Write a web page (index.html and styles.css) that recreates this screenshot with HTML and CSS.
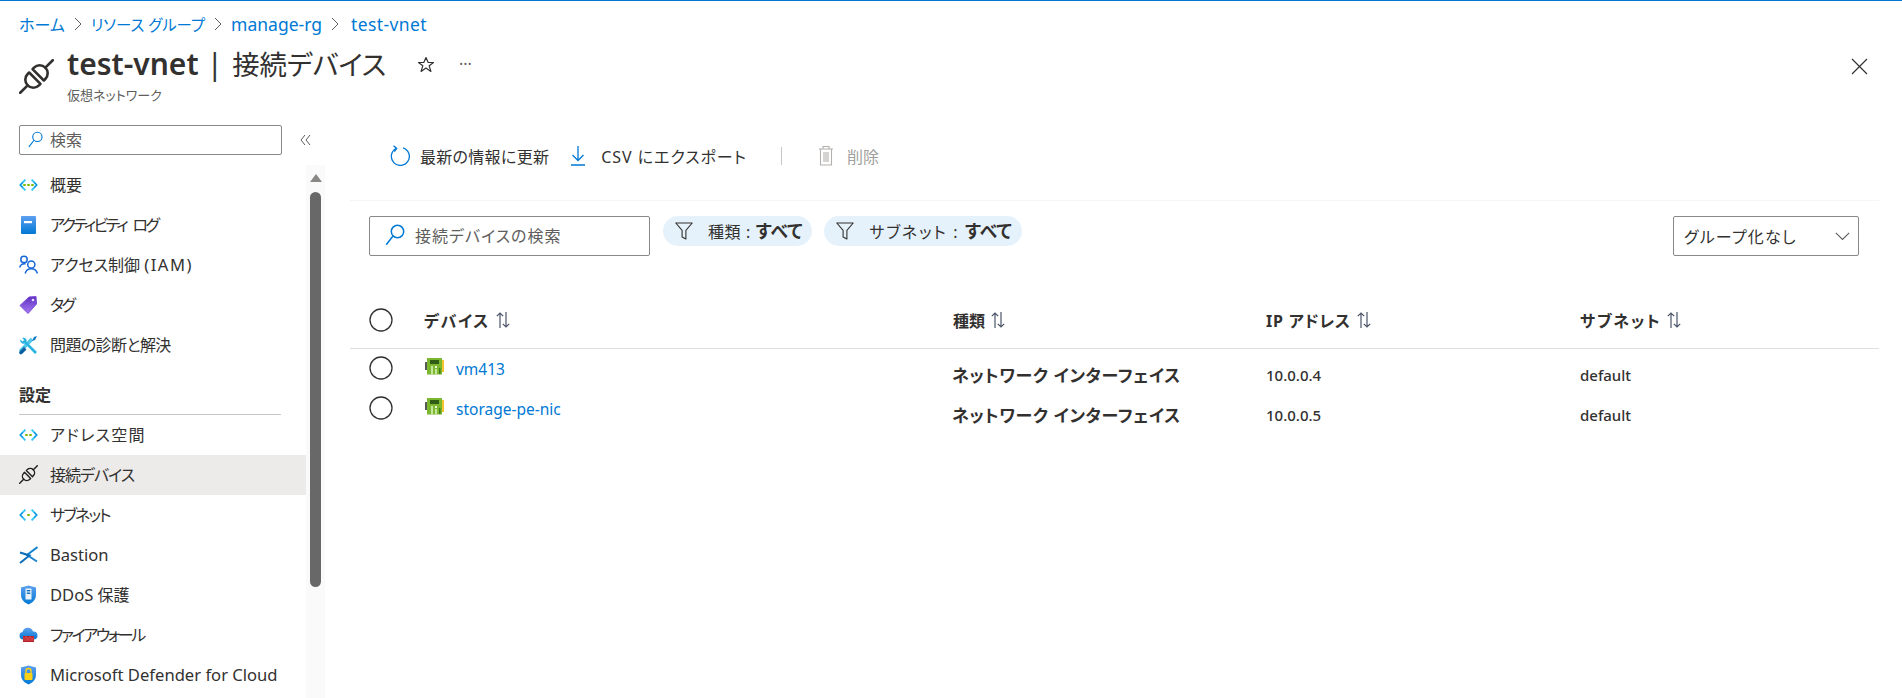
FILE: index.html
```html
<!DOCTYPE html>
<html lang="ja">
<head>
<meta charset="utf-8">
<title>test-vnet | 接続デバイス</title>
<link rel="stylesheet" href="styles.css">
</head>
<body>
<svg class="defs" width="0" height="0" aria-hidden="true">
  <defs>
    <linearGradient id="gb" x1="0" y1="0" x2="0" y2="1"><stop offset="0" stop-color="#5ea0ef"/><stop offset="1" stop-color="#0078d4"/></linearGradient>
    <linearGradient id="gp" x1="0" y1="0" x2="0" y2="1"><stop offset="0" stop-color="#5e2fc0"/><stop offset="1" stop-color="#a67af4"/></linearGradient>
    <symbol id="plug" viewBox="0 0 35 35">
      <g transform="rotate(-45 17.5 17.5) translate(17.5 17.5)" fill="none" stroke="currentColor" stroke-width="2.6" stroke-linecap="round" stroke-linejoin="round">
        <path d="M-2.4-8H-4.5A8 8 0 0 0-4.5 8H-2.4Z"/>
        <path d="M2.4-8H4.5A8 8 0 0 1 4.5 8H2.4Z"/>
        <path d="M-12.5 0H-23M12.5 0H23"/>
      </g>
    </symbol>
    <symbol id="chev" viewBox="0 0 19 12">
      <path d="M6.4 .6 1.2 6l5.2 5.4" fill="none" stroke="#3cc8f4" stroke-width="1.9"/>
      <path d="M12.6 .6 17.8 6l-5.2 5.4" fill="none" stroke="#3cc8f4" stroke-width="1.9"/>
      <path d="M4 3.4 1.2 6l2.8 2.6M15 3.4 17.8 6 15 8.6" fill="none" stroke="#0078d4" stroke-width="1"/>
    </symbol>
    <symbol id="sort" viewBox="0 0 14 18">
      <path d="M4 17V2M.8 5.2 4 2l3.2 3.2M10 1v15M6.8 12.8 10 16l3.2-3.2" fill="none" stroke="#4a5568" stroke-width="1.2"/>
    </symbol>
    <symbol id="mag" viewBox="0 0 20 22">
      <circle cx="12.5" cy="7.5" r="6.2" fill="none" stroke="#0078d4" stroke-width="1.5"/>
      <path d="M8 12 1.2 20.8" fill="none" stroke="#0078d4" stroke-width="1.5"/>
    </symbol>
    <symbol id="funnel" viewBox="0 0 18 18">
      <path d="M.8 1h16.4l-6.3 7.4V17L7.1 15V8.4Z" fill="none" stroke="#323130" stroke-width="1.1" stroke-linejoin="round"/>
    </symbol>
    <symbol id="nic" viewBox="0 0 19 18">
      <rect x="0" y="4" width="2" height="8" fill="#59595b"/>
      <rect x="17" y="2" width="2" height="12" fill="#f4c430"/>
      <rect x="2" y="0" width="15" height="16.5" fill="#7cb82f"/>
      <rect x="5" y="2" width="9" height="4" fill="#2f5d16"/>
      <rect x="6" y="8" width="2" height="8" fill="#c8e6a0"/>
      <rect x="10" y="8" width="2" height="2" fill="#e8f5d0"/>
      <rect x="10" y="11" width="2" height="5" fill="#c8e6a0"/>
      <rect x="14" y="10" width="1.5" height="6" fill="#3f7d1a"/>
    </symbol>
    <symbol id="radio" viewBox="0 0 24 24">
      <circle cx="12" cy="12" r="11" fill="#fff" stroke="#323130" stroke-width="1.3"/>
    </symbol>
  </defs>
</svg>

<nav class="crumbs">
  <a href="#">ホーム</a>
  <svg class="crumb-sep" viewBox="0 0 8 14"><path d="M1 1l6 6-6 6" fill="none" stroke="#605e5c" stroke-width="1"/></svg>
  <a href="#" class="crumb-ja">リソース グループ</a>
  <svg class="crumb-sep" viewBox="0 0 8 14"><path d="M1 1l6 6-6 6" fill="none" stroke="#605e5c" stroke-width="1"/></svg>
  <a href="#" class="crumb-lat">manage-rg</a>
  <svg class="crumb-sep crumb-sep-last" viewBox="0 0 8 14"><path d="M1 1l6 6-6 6" fill="none" stroke="#605e5c" stroke-width="1"/></svg>
  <a href="#" class="crumb-lat crumb-end">test-vnet</a>
</nav>

<header class="head">
  <svg class="head-icon"><use href="#plug"/></svg>
  <div class="head-text">
    <h1 class="title"><b class="title-name">test-vnet</b><span class="title-bar">|</span><span class="title-page">接続デバイス</span></h1>
    <div class="subtitle">仮想ネットワーク</div>
  </div>
  <svg class="star" viewBox="0 0 18 18"><path d="M9 1.500l2.200 5h5.300l-4.300 3.300 1.700 5.600L9 12l-4.900 3.400 1.700-5.600L1.500 6.500h5.300Z" fill="none" stroke="#323130" stroke-width="1.200" stroke-linejoin="round"/></svg>
  <span class="more">···</span>
  <svg class="close" viewBox="0 0 17 17"><path d="M1 1l15 15M16 1 1 16" fill="none" stroke="#323130" stroke-width="1.200"/></svg>
</header>

<div class="body">
  <aside class="side">
    <div class="side-top">
      <div class="side-search">
        <svg class="mag-s"><use href="#mag"/></svg>
        <span>検索</span>
      </div>
      <svg class="collapse" viewBox="0 0 11 12"><path d="M5 1 1 6l4 5M10 1 6 6l4 5" fill="none" stroke="#605e5c" stroke-width="1"/></svg>
    </div>
    <div class="side-scroll">
      <ul class="menu">
        <li class="item"><span class="ic"><svg class="ic-chev"><use href="#chev"/></svg><i class="dots"><b></b><b></b><b></b></i></span><span>概要</span></li>
        <li class="item"><span class="ic"><svg class="ic-svg" viewBox="0 0 19 20"><rect x="2" y="1" width="15" height="18" rx="1" fill="url(#gb)"/><rect x="5" y="6" width="8" height="2.200" fill="#fff"/></svg></span><span class="sp-log">アクティビティ ログ</span></li>
        <li class="item"><span class="ic"><svg class="ic-svg" viewBox="0 0 19 20"><g fill="none" stroke="#1666d8" stroke-width="1.500"><circle cx="5" cy="4.500" r="3.200"/><path d="M.7 12.500A4.600 4.600 0 0 1 6.500 9"/><circle cx="12.300" cy="9.500" r="3.600"/><path d="M6.200 18.500a6.300 6.300 0 0 1 12.200 0"/></g></svg></span><span>アクセス制御 <span class="lat-wide">(IAM)</span></span></li>
        <li class="item"><span class="ic"><svg class="ic-svg" viewBox="0 0 19 20"><path d="M1 10.500 10 2l7-.5.500 7.500-8.500 9.500Z" fill="url(#gp)" stroke="#7b4fd6" stroke-width="1" stroke-linejoin="round"/><circle cx="14" cy="5" r="1.300" fill="#e8dcff"/></svg></span><span class="sp-n25">タグ</span></li>
        <li class="item"><span class="ic"><svg class="ic-svg" viewBox="0 0 19 20"><path d="M1 16.500 13 4" stroke="#50c7e8" stroke-width="3.600"/><path d="M15 2l3-1-2 4-3 1Z" fill="#0a77c2"/><path d="M3 3a3.500 3.500 0 0 1 4 .8 3.500 3.500 0 0 1 .6 3L18 17l-2 2L5.800 8.400a3.500 3.500 0 0 1-4.600-4l2.500 2 1.500-1.500Z" fill="#28b4e0"/><path d="M1 16l4-4 2.500 2.500-4.500 4.500a1.800 1.800 0 0 1-2-3Z" fill="#0b5fa3"/></svg></span><span class="sp-n06">問題の診断と解決</span></li>
        <li class="group">設定</li>
        <li class="item"><span class="ic"><svg class="ic-chev"><use href="#chev"/></svg><i class="dots"><b></b><b></b></i></span><span class="sp-p13">アドレス空間</span></li>
        <li class="item current"><span class="ic"><svg class="ic-plug"><use href="#plug"/></svg></span><span class="sp-n10">接続デバイス</span></li>
        <li class="item"><span class="ic"><svg class="ic-chev"><use href="#chev"/></svg><i class="dots"><b></b></i></span><span class="sp-n20">サブネット</span></li>
        <li class="item"><span class="ic"><svg class="ic-svg" viewBox="0 0 19 20"><path d="M18.500 2 8 10l10 6.500" fill="none" stroke="#1a85d0" stroke-width="2"/><path d="M1 7.500 10.500 10.500 1 18" fill="none" stroke="#0a6cb8" stroke-width="2"/></svg></span><span class="lat">Bastion</span></li>
        <li class="item"><span class="ic"><svg class="ic-svg" viewBox="0 0 19 20"><path d="M9.500 .5 17 2.500V10c0 5-4 8-7.500 9.500C6 18 2 15 2 10V2.500Z" fill="url(#gb)"/><rect x="6.500" y="3.500" width="6" height="11" rx=".6" fill="#eaf3fb"/><rect x="7.700" y="5" width="3.600" height="1.400" fill="#0a6cb8"/><rect x="7.700" y="7.500" width="3.600" height="1.400" fill="#0a6cb8"/></svg></span><span><span class="lat">DDoS</span> 保護</span></li>
        <li class="item"><span class="ic"><svg class="ic-svg" viewBox="0 0 19 20"><path d="M4 14.500a3.800 3.800 0 0 1-.5-7.500A5.500 5.500 0 0 1 14 6.500a4 4 0 0 1 1 8Z" fill="url(#gb)"/><rect x="4" y="11" width="11" height="6" fill="#b5202a"/><path d="M4 13h11M4 15h11M7 11v2M11 11v2M9 13v2M13 13v2" stroke="#e86a6a" stroke-width=".6"/></svg></span><span class="sp-n24">ファイアウォール</span></li>
        <li class="item"><span class="ic"><svg class="ic-svg" viewBox="0 0 19 20"><path d="M9.500 .5 17 2.500V10c0 5-4 8-7.500 9.500C6 18 2 15 2 10V2.500Z" fill="url(#gb)"/><rect x="5.500" y="8" width="8" height="7" rx="1" fill="#fcd116"/><path d="M7 8V6a2.500 2.500 0 0 1 5 0v2" fill="none" stroke="#fcd116" stroke-width="1.400"/></svg></span><span class="lat">Microsoft Defender for Cloud</span></li>
      </ul>
      <div class="scrollbar">
        <i class="sb-arrow"></i>
        <i class="sb-thumb"></i>
      </div>
    </div>
  </aside>

  <main class="main">
    <div class="toolbar">
      <button class="tool"><svg class="tool-refresh" viewBox="0 0 20 21"><path d="M6 3.500A9 9 0 1 0 13 2.800M3.500 .8 6.700 3.400 4.400 6.600" fill="none" stroke="#0078d4" stroke-width="1.300"/></svg><span class="sp-p03">最新の情報に更新</span></button>
      <button class="tool tool-export"><svg class="tool-dl" viewBox="0 0 14 21"><path d="M7 1v14M1.500 10 7 15.500 12.500 10M0 20h14" fill="none" stroke="#0078d4" stroke-width="1.300"/></svg><span class="sp-csv">CSV にエクスポート</span></button>
      <i class="tool-sep"></i>
      <button class="tool tool-off"><svg class="tool-trash" viewBox="0 0 16 21"><path d="M1 4h14M5 4V1.500h6V4M2.500 4v16h11V4M6 7v10M8 7v10M10 7v10" fill="none" stroke="#b3b0ad" stroke-width="1.100"/></svg>削除</button>
    </div>

    <div class="filters">
      <div class="search">
        <svg class="mag-m"><use href="#mag"/></svg>
        <span class="sp-p10">接続デバイスの検索</span>
      </div>
      <div class="pill"><svg class="funnel"><use href="#funnel"/></svg><span><span class="sp-p06">種類 : </span><b>すべて</b></span></div>
      <div class="pill"><svg class="funnel"><use href="#funnel"/></svg><span><span class="sp-p17">サブネット : </span><b>すべて</b></span></div>
      <div class="select"><span class="sp-p12">グループ化なし</span><svg class="select-chev" viewBox="0 0 15 9"><path d="M.8.800 7.500 7.500 14.200.800" fill="none" stroke="#605e5c" stroke-width="1.100"/></svg></div>
    </div>

    <div class="grid-row grid-head">
      <svg class="radio"><use href="#radio"/></svg>
      <div class="th"><span class="sp-p15">デバイス</span><svg class="sort"><use href="#sort"/></svg></div>
      <div class="th">種類<svg class="sort"><use href="#sort"/></svg></div>
      <div class="th"><span class="sp-p08">IP アドレス</span><svg class="sort"><use href="#sort"/></svg></div>
      <div class="th"><span class="sp-p17">サブネット</span><svg class="sort"><use href="#sort"/></svg></div>
    </div>
    <div class="grid-row grid-item">
      <svg class="radio radio-row"><use href="#radio"/></svg>
      <div class="dev"><svg class="nic"><use href="#nic"/></svg><a href="#">vm413</a></div>
      <div class="kind">ネットワーク インターフェイス</div>
      <div class="val">10.0.0.4</div>
      <div class="val">default</div>
    </div>
    <div class="grid-row grid-item">
      <svg class="radio radio-row"><use href="#radio"/></svg>
      <div class="dev"><svg class="nic"><use href="#nic"/></svg><a href="#">storage-pe-nic</a></div>
      <div class="kind">ネットワーク インターフェイス</div>
      <div class="val">10.0.0.5</div>
      <div class="val">default</div>
    </div>
  </main>
</div>
</body>
</html>
```
FILE: styles.css
```css
* { box-sizing: border-box; }
html, body { margin: 0; padding: 0; }
body {
  width: 1902px;
  height: 698px;
  overflow: hidden;
  background: #fff;
  border-top: 1px solid #0078d4;
  color: #323130;
  font-family: "Noto Sans", "Noto Sans CJK JP", sans-serif;
  font-feature-settings: "palt";
  font-size: 16px;
  display: flex;
  flex-direction: column;
}
.defs { position: absolute; }
a { color: #0078d4; text-decoration: none; }

/* Per-label tracking: the reference face sets kana tighter or looser than the stand-in */
.sp-log { letter-spacing: -2.700px; word-spacing: 5px; }
.sp-n25 { letter-spacing: -2.500px; }
.sp-n24 { letter-spacing: -2.400px; }
.sp-n20 { letter-spacing: -2px; }
.sp-n10 { letter-spacing: -1px; }
.sp-n06 { letter-spacing: -.6px; }
.sp-p03 { letter-spacing: .3px; }
.sp-p06 { letter-spacing: .6px; }
.sp-p08 { letter-spacing: .8px; }
.sp-csv { letter-spacing: .95px; }
.sp-p10 { letter-spacing: 1px; }
.sp-p12 { letter-spacing: 1.200px; }
.sp-p13 { letter-spacing: 1.300px; }
.sp-p15 { letter-spacing: 1.500px; }
.sp-p17 { letter-spacing: 1.700px; }
.lat { font-size: 16.600px; }
.lat-wide { font-size: 16.600px; letter-spacing: 1.500px; }

.crumbs { height: 46px; padding-left: 19px; display: flex; align-items: center; font-size: 16px; }
.crumb-ja { font-size: 15.400px; }
.crumb-lat { font-size: 17.500px; }
.crumb-end { letter-spacing: .4px; }
.crumb-sep { width: 8px; height: 14px; margin: 0 9px; }
.crumb-sep-last { margin-right: 12px; }

.head { height: 78px; padding: 0 34px 0 19px; display: flex; align-items: flex-start; flex: none; }
.head-icon { width: 35px; height: 35px; margin-top: 12px; margin-right: 13px; color: #323130; }
.head-text { width: 350px; margin-top: -1px; }
.title { margin: 0; height: 36px; line-height: 36px; font-size: 30px; font-weight: 400; white-space: nowrap; display: flex; align-items: baseline; }
.title-name { font-weight: 600; }
.title-bar { margin: 0 9px 0 8px; }
.title-page { font-size: 27.400px; }
.subtitle { height: 26px; line-height: 26px; font-size: 13px; color: #605e5c; }
.star { width: 18px; height: 18px; margin-top: 9px; }
.more { margin-left: 24px; margin-top: 5px; font-size: 16px; line-height: 24px; color: #605e5c; }
.close { width: 17px; height: 17px; margin-top: 11px; margin-left: auto; }

.body { flex: 1; display: flex; min-height: 0; }
.side { width: 325px; flex: none; display: flex; flex-direction: column; min-height: 0; }
.side-top { display: flex; align-items: center; height: 40px; flex: none; padding-left: 19px; padding-bottom: 10px; }
.side-search { width: 263px; height: 30px; border: 1px solid #8a8886; border-radius: 2px; display: flex; align-items: center; padding: 0 0 2px 8px; font-size: 16px; color: #605e5c; }
.mag-s { width: 15px; height: 17px; margin-right: 7px; }
.collapse { width: 11px; height: 12px; margin-left: 18px; }
.side-scroll { flex: 1; display: flex; min-height: 0; overflow: hidden; }
.menu { list-style: none; margin: 0; padding: 0; width: 306px; flex: none; }
.item { height: 40px; display: flex; align-items: center; font-size: 16px; white-space: nowrap; padding: 0 0 2px 19px; }
.item .ic { margin-top: 2px; }
.item.current { background: #edebe9; }
.group { height: 40px; margin: 10px 25px 0 19px; border-bottom: 1px solid #c8c6c4; font-weight: 600; line-height: 41px; font-size: 16px; }
.ic { width: 31px; height: 20px; position: relative; display: block; flex: none; }
.ic-svg { width: 19px; height: 20px; display: block; }
.ic-chev { width: 19px; height: 12px; position: absolute; left: 0; top: 4px; }
.ic-plug { width: 19px; height: 19px; display: block; color: #201f1e; }
.dots { position: absolute; left: 0; width: 19px; top: 8.500px; display: flex; justify-content: center; gap: 1.500px; }
.dots b { width: 2.500px; height: 2.500px; border-radius: 50%; background: #7fba00; }
.scrollbar { width: 19px; background: #fafafa; flex: none; display: flex; flex-direction: column; align-items: center; padding-top: 9px; }
.sb-arrow { width: 0; height: 0; border-left: 6px solid transparent; border-right: 6px solid transparent; border-bottom: 8px solid #8a8886; }
.sb-thumb { width: 11px; height: 395px; margin-top: 10px; background: #686868; border-radius: 6px; }

.main { flex: 1; margin: 0 23px 0 25px; min-width: 0; }
.toolbar { height: 76px; padding: 0 0 14px 40px; border-bottom: 1px solid #f6f5f4; display: flex; align-items: center; }
.tool { border: 0; background: none; padding: 0; font: inherit; font-feature-settings: inherit; color: #323130; display: flex; align-items: center; white-space: nowrap; }
.tool-refresh { width: 20px; height: 21px; margin-right: 10px; }
.tool-export { margin-left: 22px; }
.tool-dl { width: 14px; height: 21px; margin-right: 16px; }
.tool-sep { width: 1px; height: 18px; background: #c8c6c4; margin-left: 34px; }
.tool-off { margin-left: 36px; color: #a19f9d; }
.tool-trash { width: 16px; height: 21px; margin-right: 13px; }

.filters { margin-top: 15px; padding: 0 20px 0 19px; display: flex; align-items: flex-start; }
.search { width: 281px; height: 40px; border: 1px solid #8a8886; border-radius: 2px; display: flex; align-items: center; padding: 0 0 2px 15px; color: #605e5c; }
.mag-m { width: 20px; height: 22px; margin-right: 10px; }
.pill { height: 30px; margin-left: 13px; padding: 0 10px 2px 12px; border-radius: 15px; background: #e6f2fb; display: flex; align-items: center; white-space: nowrap; }
.pill + .pill { margin-left: 12px; }
.pill b { font-weight: 700; font-size: 17.700px; }
.funnel { width: 18px; height: 18px; margin-right: 15px; margin-top: 2px; }
.select { width: 186px; height: 40px; margin-left: auto; border: 1px solid #8a8886; border-radius: 2px; display: flex; align-items: center; padding: 0 8px 0 10px; justify-content: space-between; }
.select-chev { width: 15px; height: 9px; }

.grid-row { display: grid; grid-template-columns: 55px 529px 313px 314px 1fr; padding-left: 19px; align-items: center; }
.grid-head { height: 93px; padding-top: 36px; border-bottom: 1px solid #e1dfdd; }
.grid-item { height: 40px; }
.radio { width: 24px; height: 24px; display: block; }
.radio-row { margin-top: -2px; }
.th { font-weight: 700; display: flex; align-items: center; white-space: nowrap; }
.sort { width: 14px; height: 18px; margin-left: 6px; }
.dev { display: flex; align-items: center; font-size: 15.500px; }
.nic { width: 19px; height: 18px; margin: -4px 12px 0 1px; }
.kind { font-weight: 600; font-size: 17px; letter-spacing: .6px; padding-top: 10px; white-space: nowrap; margin-left: -1px; }
.val { font-size: 15px; font-weight: 500; padding-top: 12px; }
```
